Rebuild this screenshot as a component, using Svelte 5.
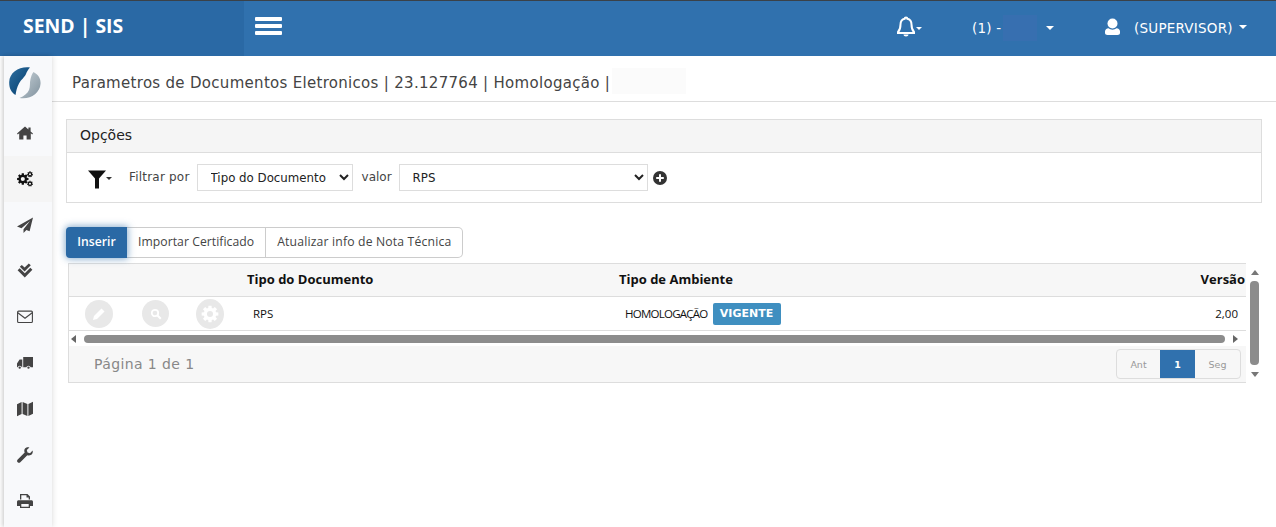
<script>
  function gearPath(cx, cy, ro, ri, teeth) {
    const pts = [];
    const step = (Math.PI * 2) / teeth;
    for (let i = 0; i < teeth; i++) {
      const a = i * step - Math.PI / 2;
      const w = step * 0.24;
      [[ri, a - step / 2 + w * 0.6], [ro, a - w], [ro, a + w], [ri, a + step / 2 - w * 0.6]].forEach(([r, t]) => {
        pts.push(`${(cx + r * Math.cos(t)).toFixed(2)} ${(cy + r * Math.sin(t)).toFixed(2)}`);
      });
    }
    const hole = ri * 0.48;
    return `M${pts.join('L')}zM${cx - hole} ${cy}a${hole} ${hole} 0 1 0 ${hole * 2} 0a${hole} ${hole} 0 1 0 ${-hole * 2} 0z`;
  }
  const paths = {
    home: 'M8 1.500 0 8.500l.8 1L2.200 8.300V14.500H6.400V10.500H9.600V14.500H13.800V8.300L15.200 9.500 16 8.500 13.600 6.400V2.500H11.400V4.500z',
    send: 'M16 .5 0 9.500l4.500 1.800L13 4 6.500 12.200V16l2.900-3 3.200 1.300z',
    check: 'M2.800 3.800 4.800 1.900 7.600 4.600 11.800.4 13.800 2.300 7.600 8.400zM.6 7.200 2.700 5.200 7.800 10.200 13.300 4.800 15.400 6.800 7.800 14.400z',
    truck: 'M6.200 2H16V12.300H13.700A2.300 2.300 0 0 0 9.300 12.300H6.200zM5.300 4.500V12.300H4.900A2.300 2.300 0 0 0 .5 12.300H0V8.400L2.600 4.500zM2.700 11.400A1.200 1.200 0 1 0 2.700 13.800 1.200 1.200 0 0 0 2.700 11.400zM11.500 11.400A1.200 1.200 0 1 0 11.500 13.800 1.200 1.200 0 0 0 11.500 11.400z',
    map: 'M0 3.200 4.600 1V13L0 15.200zM5.600 1 10.400 3V15L5.600 13zM11.400 3 16 .8V12.800L11.400 15z',
    wrench: 'M15.600 3.600 13 6.200 10.500 5.500 9.800 3 12.400.4C10.600-.2 8.500.4 7.700 2.100 7.100 3.300 7.200 4.600 7.700 5.600L.7 12.600A1.800 1.800 0 0 0 3.300 15.200L10.300 8.200C11.400 8.700 12.700 8.700 13.800 8.100 15.400 7.200 16.100 5.300 15.600 3.600z',
    print: 'M3 1H10.500L13 3.500V6.500H11.700V4.500H9.500V2.300H4.300V6.500H3zM1.500 7.200H14.500C15.300 7.200 16 7.900 16 8.700V13H13V15H3V13H0V8.700C0 7.900.7 7.200 1.500 7.200zM4.300 11V13.700H11.700V11z'
  };
  const order = ['home', 'cogs', 'send', 'check', 'mail', 'truck', 'map', 'wrench', 'print'];
  const gearBig = gearPath(5.800, 8, 5.800, 4.300, 8);
  const gearA = gearPath(13, 3.300, 3, 2.100, 7);
  const gearB = gearPath(13, 12.700, 3, 2.100, 7);
  const gearAct = gearPath(9, 9, 8.500, 6.300, 8);
</script>

<div class="page">
  <header class="topbar">
    <div class="brand">SEND | SIS</div>
    <button class="burger" aria-label="menu"><span></span><span></span><span></span></button>
    <div class="spacer"></div>
    <div class="bell">
      <svg width="22" height="22" viewBox="0 0 22 22"><path d="M11 1.500c.8 0 1.300.5 1.300 1.200 2.700.6 4.200 2.800 4.200 5.800 0 3.600.8 5.800 2.500 7.500v1H3v-1c1.700-1.700 2.500-3.900 2.500-7.500 0-3 1.500-5.200 4.200-5.800 0-.7.500-1.200 1.300-1.200z" fill="none" stroke="#fff" stroke-width="2" /><path d="M8.500 18.500h5c0 1.200-1.100 2-2.500 2s-2.500-.8-2.500-2z" fill="#fff" /></svg>
      <i class="caret small"></i>
    </div>
    <div class="org"><span>(1) -</span><span class="mask"></span><i class="caret"></i></div>
    <div class="user">
      <svg width="17" height="18" viewBox="0 0 17 18"><ellipse cx="8.500" cy="5.500" rx="5" ry="5" fill="#fff" /><path d="M1 13.500c0-2 1.500-3 3.500-3.200 1 .9 2.500 1.400 4 1.400s3-.5 4-1.400c2 .2 3.500 1.200 3.500 3.200v1.500c0 1-1 2-2.500 2h-10C2 17 1 16 1 15z" fill="#fff" /></svg>
      <span class="uname">(SUPERVISOR)</span><i class="caret"></i>
    </div>
  </header>

  <div class="body">
    <aside class="side">
      <div class="logo">
        <svg width="32" height="32" viewBox="0 0 32 32">
          <defs>
            <linearGradient id="lb" x1="0" y1="0" x2="1" y2="1"><stop offset="0" stop-color="#2f6f9f" /><stop offset="1" stop-color="#003a6b" /></linearGradient>
            <linearGradient id="lg" x1="0" y1="0" x2="1" y2="1"><stop offset="0" stop-color="#c9d2d8" /><stop offset="1" stop-color="#7f919d" /></linearGradient>
          </defs>
          <path d="M21 .5C11 -1 .5 5 .2 15c-.200 6 2 10.500 6.300 13 .7-4 1.500-8 3.500-11.500 2.500-4.500 5.500-6 7-9.500.9-2.300 2-4.500 4-6.500z" fill="url(#lb)" />
          <path d="M24.500 5C29 7.500 32 11 31.500 17 31 26 21 33 10.500 31c4.500-2 8-4.500 9.500-8 1.500-3.500.5-7.500 1.500-11 .5-2.500 1.500-5 3-7z" fill="url(#lg)" />
        </svg>
      </div>
      {#each order as id}
        <div class="nav" class:active={id === 'cogs'}>
          {#if id === 'cogs'}
            <svg width="16" height="16" viewBox="0 0 16 16">
              <path d={gearBig} fill="#111" fill-rule="evenodd" />
              <path d={gearA} fill="#111" fill-rule="evenodd" />
              <path d={gearB} fill="#111" fill-rule="evenodd" />
            </svg>
          {:else if id === 'mail'}
            <svg width="16" height="16" viewBox="0 0 16 16"><rect x=".6" y="2.100" width="14.800" height="11.400" rx="1" fill="none" stroke="#444" stroke-width="1.100" /><path d="M.8 3.800 8 9.300l7.200-5.500" fill="none" stroke="#444" stroke-width="1.100" /></svg>
          {:else}
            <svg width="16" height="16" viewBox="0 0 16 16"><path d={paths[id]} fill="#444" fill-rule="evenodd" /></svg>
          {/if}
        </div>
      {/each}
    </aside>

    <main class="main">
      <div class="title">
        <span>Parametros de Documentos Eletronicos | 23.127764 | Homologação |</span>
        <span class="blur"></span>
      </div>

      <div class="content">
        <section class="panel">
          <div class="panel-head">Opções</div>
          <div class="filters">
            <div class="funnel">
              <svg width="18" height="19" viewBox="0 0 18 19"><path d="M0 .5h18L11 8.500V18.500H7V8.500z" fill="#111" /></svg>
              <i class="caret dark small"></i>
            </div>
            <label class="lbl first" for="f1">Filtrar por</label>
            <select id="f1" class="sel one"><option>Tipo do Documento</option></select>
            <label class="lbl val" for="f2">valor</label>
            <select id="f2" class="sel two"><option>RPS</option></select>
            <svg class="plus" width="14" height="14" viewBox="0 0 14 14"><circle cx="7" cy="7" r="7" fill="#333" /><path d="M3.200 7h7.600M7 3.200v7.600" stroke="#fff" stroke-width="2" /></svg>
          </div>
        </section>

        <div class="btns">
          <button class="btn primary">Inserir</button>
          <button class="btn">Importar Certificado</button>
          <button class="btn last">Atualizar info de Nota Técnica</button>
        </div>

        <div class="grid-wrap">
          <div class="grid">
            <div class="row head">
              <div class="c-act"></div>
              <div class="c-doc">Tipo do Documento</div>
              <div class="c-amb">Tipo de Ambiente</div>
              <div class="c-ver">Versão</div>
            </div>
            <div class="row data">
              <div class="c-act acts">
                <span class="round r1"><svg width="14" height="14" viewBox="0 0 14 14"><path d="M9.500 1.500 12.500 4.500 5 12 1 13 2 9z" fill="#fff" /></svg></span>
                <span class="round r2"><svg width="12" height="12" viewBox="0 0 12 12"><circle cx="5" cy="5" r="3.200" fill="none" stroke="#fff" stroke-width="1.800" /><path d="M7.500 7.500 10.800 10.800" stroke="#fff" stroke-width="2" /></svg></span>
                <span class="round r3"><svg width="18" height="18" viewBox="0 0 18 18"><path d={gearAct} fill="#fff" fill-rule="evenodd" /></svg></span>
              </div>
              <div class="c-doc cell-doc">RPS</div>
              <div class="c-amb cell-amb"><span class="amb">HOMOLOGAÇÃO</span> <span class="badge">VIGENTE</span></div>
              <div class="c-ver cell-ver">2,00</div>
            </div>
            <div class="hscroll">
              <i class="tri left"></i>
              <div class="hthumb"></div>
              <i class="tri right"></i>
            </div>
            <div class="pager">
              <span class="pinfo">Página 1 de 1</span>
              <div class="pages">
                <span class="pg ant">Ant</span>
                <span class="pg on">1</span>
                <span class="pg">Seg</span>
              </div>
            </div>
          </div>
          <div class="vscroll">
            <i class="tri up"></i>
            <div class="vthumb"></div>
            <i class="tri down"></i>
          </div>
        </div>
      </div>
    </main>
  </div>
</div>

<style>
  :global(body) { margin: 0; background: #fff; }
  .page { height: 527px; overflow: hidden; display: flex; flex-direction: column; font-family: "DejaVu Sans", sans-serif; color: #333; }

  .topbar { height: 56px; box-sizing: border-box; flex: none; display: flex; align-items: center; background: #3071ae; border-top: 1px solid #3a4148; color: #fff; padding-right: 27px; }
  .brand { padding-left: 23px; height: 100%; display: flex; align-items: center; background: #2a69a5; font: 700 19.400px "Open Sans", sans-serif; padding-bottom: 7px; box-sizing: border-box; width: 244px; }
  .burger { margin-left: 11px; margin-top: -6px; width: 27px; padding: 0; border: 0; background: none; display: flex; flex-direction: column; gap: 3px; }
  .burger span { height: 4px; border-radius: 1px; background: #fff; display: block; }
  .spacer { flex: 1; }
  .bell { width: 77px; display: flex; align-items: center; margin-top: -3px; margin-left: -1px; }
  .caret { display: inline-block; width: 0; height: 0; border: 4px solid transparent; border-top-color: #fff; border-bottom-width: 0; }
  .caret.small { border-width: 3px 3.500px 0; margin-left: -1px; margin-top: 2px; }
  .caret.dark { border-top-color: #333; margin-left: 0; }
  .org { width: 132px; display: flex; align-items: center; font-size: 13.500px; letter-spacing: .2px; margin-top: -1px; }
  .mask { width: 34px; height: 26px; margin: 0 9px 0 2px; background: #376fb0; }
  .user { width: 145px; display: flex; align-items: center; font-size: 13.500px; letter-spacing: .22px; margin-top: -4px; }
  .uname { margin: 0 6px 0 13px; padding-top: 2px; }

  .body { flex: 1; display: flex; min-height: 0; }
  .side { width: 48px; margin-left: 4px; flex: none; background: #f8f9fb; box-shadow: -2px 0 4px rgba(0,0,0,.16), 2px 0 5px rgba(0,0,0,.08); position: relative; }
  .logo { height: 54px; display: flex; align-items: center; justify-content: center; padding-right: 7px; box-sizing: border-box; }
  .nav { height: 46px; display: flex; align-items: center; justify-content: center; padding-right: 7px; box-sizing: border-box; }
  .nav.active { background: #f5f5f5; }

  .main { flex: 1; min-width: 0; }
  .title { height: 46px; box-sizing: border-box; padding: 5px 0 0 20px; display: flex; align-items: center; font-size: 15px; letter-spacing: .3px; color: #444; border-bottom: 1px solid #ddd; }
  .title span:first-child { padding-top: 3px; }
  .blur { width: 74px; height: 26px; background: #fbfbfb; margin-left: 2px; }
  .content { padding: 17px 14px 0; }

  .panel { border: 1px solid #ddd; height: 84px; box-sizing: border-box; }
  .panel-head { height: 33px; background: #f5f5f5; border-bottom: 1px solid #ddd; box-sizing: border-box; padding: 5px 13px; font-size: 14px; line-height: 20px; color: #222; }
  .filters { display: flex; align-items: center; height: 49px; padding-left: 21px; font-size: 12px; }
  .funnel { display: flex; align-items: center; width: 41px; }
  .funnel svg { margin-top: 3px; }
  .lbl { color: #444; margin-top: -2px; }
  .lbl.first { letter-spacing: .2px; }
  .sel { height: 27px; background: #fff; border: 1px solid #ddd; font: 11.800px "DejaVu Sans", sans-serif; color: #222; padding: 0 0 0 9px; border-radius: 0; }
  .one { width: 156px; margin-left: 7px; }
  .two { width: 249px; }
  .val { margin: -2px 7px 0 9px; }
  .plus { margin-left: 5px; }

  .btns { display: flex; margin-top: 24px; height: 31px; }
  .btn { height: 31px; box-sizing: border-box; padding: 0 11px 2px; background: #fff; border: 1px solid #ccc; border-left: 0; font: 12.200px "Open Sans", sans-serif; letter-spacing: .05px; color: #444; }
  .btn.primary { width: 61px; padding: 0 0 2px; background: #2a69a5; border: 0; color: #fff; font-weight: 600; border-radius: 4px 0 0 4px; box-shadow: 0 0 7px 1px rgba(42,105,165,.55); position: relative; }
  .btn.last { border-radius: 0 5px 5px 0; letter-spacing: .17px; }

  .grid-wrap { display: flex; margin: 5px 0 0 2px; height: 120px; }
  .grid { width: 1178px; flex: none; box-sizing: border-box; border: 1px solid #ddd; border-right: 0; height: 120px; }
  .row { display: flex; align-items: center; border-bottom: 1px solid #ddd; }
  .head { height: 33px; background: #f7f7f7; font: 700 13px "Open Sans", sans-serif; color: #111; box-sizing: border-box; padding-bottom: 2px; }
  .head .c-ver { padding-right: 1px; box-sizing: border-box; }
  .data { height: 34px; box-sizing: border-box; font: 11.500px "Open Sans", sans-serif; color: #111; }
  .c-act { width: 178px; flex: none; }
  .c-doc { width: 372px; flex: none; }
  .c-amb { flex: 1; }
  .c-ver { width: 120px; text-align: right; }
  .acts { display: flex; align-items: center; padding-left: 16px; box-sizing: border-box; }
  .round { display: flex; align-items: center; justify-content: center; border-radius: 50%; background: #e8e8e8; }
  .r1 { width: 28px; height: 28px; }
  .r2 { width: 27px; height: 27px; margin-left: 29px; }
  .r3 { width: 28px; height: 30px; margin-left: 27px; }
  .cell-doc { padding-left: 6px; box-sizing: border-box; }
  .cell-amb { padding-left: 6px; display: flex; align-items: center; gap: 5px; }
  .amb { letter-spacing: -.75px; }
  .cell-ver { padding-right: 8px; box-sizing: border-box; }
  .badge { background: #3f8fc0; color: #fff; font: 700 11px "DejaVu Sans", sans-serif; width: 68px; height: 22px; display: flex; align-items: center; justify-content: center; border-radius: 2px; }

  .hscroll { height: 15px; display: flex; align-items: center; background: #fff; padding: 0 8px 0 2px; }
  .tri { display: block; width: 0; height: 0; border: 4px solid transparent; flex: none; }
  .tri.left { border-left: 0; border-right: 5px solid #666; }
  .tri.right { border-right: 0; border-left: 5px solid #666; }
  .tri.up { border-top: 0; border-bottom: 5px solid #777; }
  .tri.down { border-bottom: 0; border-top: 5px solid #777; }
  .hthumb { flex: 1; height: 8px; border-radius: 4px; background: #8c8c8c; margin: 0 8px 0 8px; }

  .pager { height: 36px; background: #f7f7f7; display: flex; align-items: center; justify-content: space-between; padding: 0 5px 0 25px; box-sizing: border-box; }
  .pinfo { font-size: 14px; letter-spacing: .4px; color: #888; }
  .pages { display: flex; height: 30px; border: 1px solid #ddd; border-radius: 4px; overflow: hidden; box-sizing: border-box; width: 125px; }
  .pg { flex: 1; display: flex; align-items: center; justify-content: center; font-size: 9.500px; color: #999; }
  .pg.ant { flex: none; width: 43px; }
  .pg.on { flex: none; width: 35px; background: #3071ae; color: #fff; font-weight: 700; }

  .vscroll { width: 15px; margin-left: 1px; display: flex; flex-direction: column; align-items: center; padding: 7px 0 6px; box-sizing: border-box; background: #fff; }
  .vthumb { flex: 1; width: 9px; border-radius: 4px; background: #8c8c8c; margin: 6px 0 7px; }
</style>
